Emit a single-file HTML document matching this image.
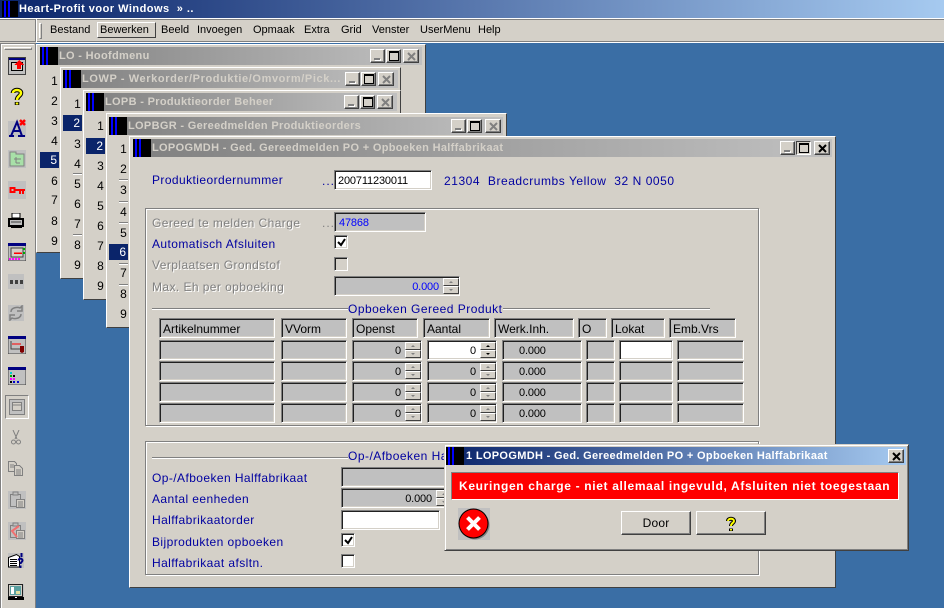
<!DOCTYPE html>
<html><head><meta charset="utf-8"><style>
html,body{margin:0;padding:0}
body{width:944px;height:608px;overflow:hidden;position:relative;background:#3a6ea5;font:12px/14px "Liberation Sans",sans-serif;color:#000}
div,i,span,svg{position:absolute;display:block;box-sizing:border-box}
i{font-style:normal}
b{font-weight:bold}
.t{white-space:nowrap;letter-spacing:.42px}
.mn{top:23px;font-size:11px;letter-spacing:0}
.bl{color:#0000a0}
.gr{color:#808080;text-shadow:1px 1px 0 #fff}
.win{background:#d4d0c8;border:1px solid;border-color:#fff #404040 #404040 #fff;box-shadow:inset 0 0 0 1px #d4d0c8,inset 1px 1px 0 1px #d4d0c8;outline:0}
.tb{height:18px;background:linear-gradient(90deg,#808080,#c0c0c0);color:#d4d0c8;font:bold 11px/18px "Liberation Sans",sans-serif;white-space:nowrap;letter-spacing:.32px;overflow:hidden;padding-left:19px}
.ic{left:0;top:0;width:18px;height:18px;background:linear-gradient(90deg,#000 2px,#00f 2px,#00f 4px,#000 4px,#000 6px,#00f 6px,#00f 8px,#000 8px)}
.btn{background:#d4d0c8;border:1px solid;border-color:#fff #404040 #404040 #fff;box-shadow:inset -1px -1px 0 #808080,inset 1px 1px 0 #d4d0c8}
.m{width:15px;height:14px;top:141px}
.m:after{content:"";position:absolute;left:3px;bottom:2px;width:6px;height:2px;background:#808080;box-shadow:1px 1px 0 #fff}
.x{width:16px;height:14px}
.x svg{left:3px;top:2px}
.mx:after{content:"";position:absolute;left:2px;top:1px;width:10px;height:10px;border:1px solid #000;border-top-width:2px;box-sizing:border-box}
.f{border:1px solid;border-color:#808080 #fff #fff #808080;box-shadow:inset 1px 1px 0 #202020,inset -1px -1px 0 #d4d0c8;background:#c0c0c0;white-space:nowrap;letter-spacing:0;padding:3px 0 0 3px;font-size:12px;line-height:14px}
.d{font-size:11px;letter-spacing:-.15px}
.w{background:#fff}
.r{text-align:right}
.n{text-align:center;width:19px;font-size:12px;line-height:16px;height:16px;margin:1px 0 0 1px}
.h{background:#0a246a;color:#fff;margin:0;text-align:right;padding-right:2px}
.hl{height:2px;background:linear-gradient(#808080 1px,#fff 1px)}
.gb{background:transparent;border:1px solid #808080;box-shadow:inset 1px 1px 0 #fff,1px 1px 0 #fff}
.ck{width:14px;height:14px;border:1px solid;border-color:#808080 #fff #fff #808080;box-shadow:inset 1px 1px 0 #202020,inset -1px -1px 0 #d4d0c8;background:#fff}
.ck.e{background:#d4d0c8}
.ck svg{left:2px;top:2px}
.sp{width:16px;height:16px}
.sp u{position:absolute;display:block;left:0;width:16px;height:8px;background:#d4d0c8;border:1px solid;border-color:#fff #404040 #404040 #fff;box-sizing:border-box}
.sp u:first-child{top:0}
.sp u:last-child{top:8px}
.sp u:after{content:"";position:absolute;left:5px;top:2px;border:2px solid transparent;border-top:0;border-bottom:2px solid #808080}
.sp u:last-child:after{border-bottom:0;border-top:2px solid #808080}
.sp.k u:after{border-bottom-color:#000}
.sp.k u:last-child:after{border-top-color:#000}
</style></head><body>

<!-- main title -->
<div style="left:0;top:0;width:944px;height:18px;background:linear-gradient(90deg,#0a246a,#a6caf0);color:#fff;font:bold 11px/19px 'Liberation Sans',sans-serif;letter-spacing:.48px;padding-left:19px;white-space:nowrap">Heart-Profit voor Windows &nbsp;» ..<i class="ic" style="left:2px;top:1px;height:16px;width:16px"></i></div>

<!-- menubar -->
<div style="left:0;top:18px;width:944px;height:25px;background:#d4d0c8;border-top:1px solid #fff;box-shadow:inset 0 1px 0 #808080"></div>
<div style="left:0;top:41px;width:944px;height:1px;background:#808080"></div>
<div style="left:36px;top:42px;width:908px;height:1px;background:#fff"></div>
<div style="left:35px;top:19px;width:1px;height:23px;background:#808080"></div>
<div style="left:36px;top:19px;width:1px;height:23px;background:#fff"></div>
<div style="left:39px;top:23px;width:3px;height:16px;background:#d4d0c8;border:1px solid;border-color:#fff #808080 #808080 #fff"></div>
<div style="left:97px;top:22px;width:59px;height:16px;border:1px solid;border-color:#fff #404040 #404040 #fff"></div>
<span class="t mn" style="left:50px">Bestand</span>
<span class="t mn" style="left:100px">Bewerken</span>
<span class="t mn" style="left:161px">Beeld</span>
<span class="t mn" style="left:197px">Invoegen</span>
<span class="t mn" style="left:253px">Opmaak</span>
<span class="t mn" style="left:304px">Extra</span>
<span class="t mn" style="left:341px">Grid</span>
<span class="t mn" style="left:372px">Venster</span>
<span class="t mn" style="left:420px">UserMenu</span>
<span class="t mn" style="left:478px">Help</span>

<!-- left toolbar -->
<div style="left:0;top:43px;width:36px;height:565px;background:#d4d0c8;border-left:1px solid #808080;border-right:1px solid #808080;box-shadow:inset 1px 0 0 #fff;border-top:1px solid #808080"></div>
<div style="left:1px;top:44px;width:33px;height:1px;background:#fff"></div>
<div style="left:4px;top:47px;width:28px;height:3px;border:1px solid;border-color:#fff #808080 #808080 #fff"></div>

<svg style="left:8px;top:57px" width="18" height="18" shape-rendering="crispEdges"><rect width="18" height="18" fill="#c0c0c0"/><rect width="18" height="3" fill="#000080"/><rect x=".5" y=".5" width="17" height="17" fill="none" stroke="#404040"/><rect x="3.500" y="5.500" width="11" height="8" fill="#d4d0c8" stroke="#000"/><path d="M11 3l5 5h-3v4h-4V8H6z" fill="#f00"/></svg>
<svg style="left:9px;top:87px" width="16" height="19"><path d="M4 6C4 2 12 2 12 6c0 3-4 3-4 7" fill="none" stroke="#000" stroke-width="4.500"/><path d="M8 15v3" stroke="#000" stroke-width="4.500"/><path d="M4 6C4 2 12 2 12 6c0 3-4 3-4 7" fill="none" stroke="#ff0" stroke-width="2.500"/><path d="M8 15.500v2" stroke="#ff0" stroke-width="2.500"/></svg>
<svg style="left:8px;top:119px" width="18" height="18"><rect y="2" width="18" height="16" fill="#c0c0c0"/><path d="M1 17h5M10 17h7M3 17L9 3l5 14M5 12h7" fill="none" stroke="#000080" stroke-width="2"/><path d="M12 1l5 5M17 1l-5 5" stroke="#f00" stroke-width="2.500"/></svg>
<svg style="left:8px;top:150px" width="18" height="18" shape-rendering="crispEdges"><rect width="18" height="18" fill="#c0c0c0"/><path d="M2 2h6v2h8v12H2z" fill="#a8e0a8" stroke="#808080"/><path d="M6 9h7M8 7v6M8 13h4" stroke="#808080" fill="none"/></svg>
<svg style="left:8px;top:181px" width="18" height="18" shape-rendering="crispEdges"><rect width="18" height="18" fill="#c0c0c0"/><rect x="2.500" y="7" width="4" height="4" fill="none" stroke="#f00" stroke-width="2"/><path d="M7 8h10v2H7zM11 10h2v3h-2zM14 10h2v3h-2z" fill="#f00"/></svg>
<svg style="left:8px;top:213px" width="16" height="16" shape-rendering="crispEdges"><path d="M4 0h8v5H4z" fill="#fff" stroke="#000"/><path d="M1 6h14v7H1z" fill="#c0c0c0" stroke="#000" stroke-width="2"/><path d="M3 13h11v2H3z" fill="#000"/><path d="M3 9h10" stroke="#404040"/></svg>
<svg style="left:8px;top:243px" width="18" height="18" shape-rendering="crispEdges"><rect width="18" height="18" fill="#c0c0c0" stroke="#404040"/><rect width="18" height="3" fill="#000080"/><rect x="3" y="5" width="12" height="9" fill="#d4d0c8" stroke="#404040"/><path d="M6 10h8" stroke="#f00" stroke-width="1.500"/><path d="M1 16h2M4 16h2M7 16h2M10 16h2" stroke="#f0f" stroke-width="2"/><path d="M16 5v2M16 9v2" stroke="#0a0" stroke-width="2"/></svg>
<svg style="left:8px;top:274px" width="16" height="15" shape-rendering="crispEdges"><rect width="16" height="15" fill="#c0c0c0"/><path d="M2 6h3v4H2zM7 6h3v4H7zM12 6h3v4h-3z" fill="#404040"/></svg>
<svg style="left:8px;top:305px" width="16" height="16"><rect width="16" height="16" fill="#c0c0c0"/><path d="M3 7C3 2 10 2 12 3l2-2v5H9M13 9c0 5-7 5-9 4l-2 2v-5h5" fill="none" stroke="#808080" stroke-width="1.500"/></svg>
<svg style="left:8px;top:336px" width="18" height="18" shape-rendering="crispEdges"><rect width="18" height="18" fill="#c0c0c0" stroke="#404040"/><rect width="18" height="3" fill="#000080"/><path d="M4 8h9" stroke="#f00"/><path d="M3 5v8h9" fill="none" stroke="#404040"/><path d="M12 10h4v6l-2 1-2-1z" fill="#800000"/></svg>
<svg style="left:8px;top:367px" width="18" height="18" shape-rendering="crispEdges"><rect width="18" height="18" fill="#c0c0c0" stroke="#404040"/><rect width="18" height="3" fill="#000080"/><path d="M2 5h2v2H2z" fill="#0cc"/><path d="M2 8h2v2H2z" fill="#0a0"/><path d="M2 11h2v2H2zM5 11h2v2H5z" fill="#f0f"/><path d="M5 14h2v2H5zM9 14h2v2H9z" fill="#00c"/><path d="M2 14h2v2H2zM5 8h2v2H5z" fill="#000"/></svg>
<div style="left:5px;top:395px;width:24px;height:24px;border:1px solid;border-color:#808080 #fff #fff #808080;background:#d4d0c8"></div>
<svg style="left:9px;top:399px" width="16" height="16" shape-rendering="crispEdges"><rect x=".5" y=".5" width="15" height="15" fill="#c0c0c0" stroke="#808080"/><rect x="3.500" y="3.500" width="9" height="8" fill="#d4d0c8" stroke="#808080"/><path d="M4 6h8" stroke="#808080"/></svg>
<svg style="left:11px;top:430px" width="10" height="15"><path d="M2 0l4 9M8 0L4 9" stroke="#808080" fill="none"/><circle cx="2.500" cy="12" r="2" fill="none" stroke="#808080"/><circle cx="7.500" cy="12" r="2" fill="none" stroke="#808080"/></svg>
<svg style="left:8px;top:461px" width="16" height="15" shape-rendering="crispEdges"><path d="M.5.500h6l2 2v8H.5z" fill="#d4d0c8" stroke="#808080"/><path d="M6.500 4.500h5l3 3v7h-8z" fill="#d4d0c8" stroke="#808080"/><path d="M8 9h5M8 11h5M8 13h5M2 4h4M2 6h4" stroke="#808080"/></svg>
<svg style="left:8px;top:491px" width="18" height="18" shape-rendering="crispEdges"><rect width="18" height="18" fill="#c0c0c0"/><path d="M2.500 3.500h10v12h-10z" fill="none" stroke="#808080"/><path d="M5 1h5v3H5z" fill="#c0c0c0" stroke="#808080"/><path d="M8.500 8.500h8v8h-8z" fill="#d4d0c8" stroke="#808080"/><path d="M10 11h5M10 13h5M10 15h5" stroke="#808080"/></svg>
<svg style="left:8px;top:522px" width="18" height="18" shape-rendering="crispEdges"><rect width="18" height="18" fill="#c0c0c0"/><path d="M2.500 3.500h10v12h-10z" fill="none" stroke="#808080"/><path d="M5 1h5v3H5z" fill="#c0c0c0" stroke="#808080"/><path d="M8.500 8.500h8v8h-8z" fill="#d4d0c8" stroke="#808080"/><path d="M10 11h5M10 13h5M10 15h5" stroke="#808080"/><path d="M11 4L4 9l5 6" fill="none" stroke="#f07070" stroke-width="2" shape-rendering="auto"/></svg>
<svg style="left:8px;top:553px" width="16" height="15"><rect width="16" height="15" fill="#c0c0c0"/><path d="M.5 4.500l8-3 3 2v10.500H.5z" fill="#fff" stroke="#000"/><path d="M2 6.500h7M2 8.500h7M2 10.500h7M2 12.500h7" stroke="#000"/><path d="M10.500 7.500c0-2.500 4-2.500 4 0 0 1.500-2 1.500-2 3.500" fill="none" stroke="#000080" stroke-width="2"/><path d="M12.500 12.500v2.500M13.500 0v4" stroke="#000080" stroke-width="2"/></svg>
<svg style="left:8px;top:584px" width="16" height="16" shape-rendering="crispEdges"><rect width="16" height="16" fill="#c0c0c0"/><rect x=".5" y=".5" width="14" height="12" fill="#d4d0c8" stroke="#202020"/><rect x="2" y="2" width="11" height="9" fill="#5aa0a0"/><path d="M3 3h3v7H3z" fill="#fff"/><path d="M8 7h4v3H8z" fill="#e0e0a0"/><rect y="13" width="16" height="3" fill="#000"/><path d="M7 13h2v1H7z" fill="#fff"/></svg>

<!-- LO -->
<div class="win" style="left:36px;top:44px;width:390px;height:209px"></div>
<div class="tb" style="left:40px;top:47px;width:382px">LO - Hoofdmenu<i class="ic"></i>
<i class="btn m" style="left:330px;top:2px"></i><i class="btn mx" style="left:346px;top:2px;width:15px;height:14px"></i><i class="btn x" style="left:363px;top:2px"><svg width="9" height="9"><path d="M1 1l7 7M8 1L1 8" stroke="#808080" stroke-width="2"/></svg></i></div>
<span class="n" style="left:44px;top:72px">1</span><span class="n" style="left:44px;top:92px">2</span><span class="n" style="left:44px;top:112px">3</span><span class="n" style="left:44px;top:132px">4</span><span class="n h" style="left:40px;top:152px">5</span><span class="n" style="left:44px;top:172px">6</span><span class="n" style="left:44px;top:191px">7</span><span class="n" style="left:44px;top:212px">8</span><span class="n" style="left:44px;top:232px">9</span>

<!-- LOWP -->
<div class="win" style="left:60px;top:67px;width:341px;height:212px"></div>
<div class="tb" style="left:63px;top:70px;width:335px;letter-spacing:.6px">LOWP - Werkorder/Produktie/Omvorm/Pick...<i class="ic"></i>
<i class="btn m" style="left:282px;top:2px"></i><i class="btn mx" style="left:298px;top:2px;width:15px;height:14px"></i><i class="btn x" style="left:315px;top:2px"><svg width="9" height="9"><path d="M1 1l7 7M8 1L1 8" stroke="#808080" stroke-width="2"/></svg></i></div>
<span class="n" style="left:67px;top:95px">1</span><span class="n h" style="left:63px;top:115px">2</span><span class="n" style="left:67px;top:135px">3</span><span class="n" style="left:67px;top:155px">4</span><div class="hl" style="left:73px;top:173px;width:9px"></div><span class="n" style="left:67px;top:175px">5</span><span class="n" style="left:67px;top:195px">6</span><span class="n" style="left:67px;top:215px">7</span><div class="hl" style="left:73px;top:234px;width:9px"></div><span class="n" style="left:67px;top:236px">8</span><span class="n" style="left:67px;top:256px">9</span>

<!-- LOPB -->
<div class="win" style="left:83px;top:90px;width:318px;height:210px"></div>
<div class="tb" style="left:86px;top:93px;width:311px">LOPB - Produktieorder Beheer<i class="ic"></i>
<i class="btn m" style="left:258px;top:2px"></i><i class="btn mx" style="left:274px;top:2px;width:15px;height:14px"></i><i class="btn x" style="left:291px;top:2px"><svg width="9" height="9"><path d="M1 1l7 7M8 1L1 8" stroke="#808080" stroke-width="2"/></svg></i></div>
<span class="n" style="left:90px;top:117px">1</span><span class="n h" style="left:86px;top:138px">2</span><span class="n" style="left:90px;top:157px">3</span><span class="n" style="left:90px;top:177px">4</span><span class="n" style="left:90px;top:197px">5</span><span class="n" style="left:90px;top:217px">6</span><span class="n" style="left:90px;top:237px">7</span><span class="n" style="left:90px;top:257px">8</span><span class="n" style="left:90px;top:277px">9</span>

<!-- LOPBGR -->
<div class="win" style="left:106px;top:113px;width:401px;height:215px"></div>
<div class="tb" style="left:109px;top:117px;width:394px">LOPBGR - Gereedmelden Produktieorders<i class="ic"></i>
<i class="btn m" style="left:342px;top:2px"></i><i class="btn mx" style="left:358px;top:2px;width:15px;height:14px"></i><i class="btn x" style="left:376px;top:2px"><svg width="9" height="9"><path d="M1 1l7 7M8 1L1 8" stroke="#808080" stroke-width="2"/></svg></i></div>
<span class="n" style="left:113px;top:140px">1</span><span class="n" style="left:113px;top:160px">2</span><div class="hl" style="left:119px;top:179px;width:9px"></div><span class="n" style="left:113px;top:181px">3</span><div class="hl" style="left:119px;top:201px;width:9px"></div><span class="n" style="left:113px;top:203px">4</span><div class="hl" style="left:119px;top:222px;width:9px"></div><span class="n" style="left:113px;top:224px">5</span><span class="n h" style="left:109px;top:244px">6</span><div class="hl" style="left:119px;top:263px;width:9px"></div><span class="n" style="left:113px;top:264px">7</span><div class="hl" style="left:119px;top:284px;width:9px"></div><span class="n" style="left:113px;top:285px">8</span><span class="n" style="left:113px;top:305px">9</span>

<!-- LOPOGMDH -->
<div class="win" style="left:129px;top:136px;width:707px;height:452px"></div>
<div class="tb" style="left:133px;top:139px;width:699px">LOPOGMDH - Ged. Gereedmelden PO + Opboeken Halffabrikaat<i class="ic"></i></div>
<i class="btn m" style="left:780px"></i><i class="btn mx" style="left:796px;top:141px;width:15px;height:14px;border-color:#404040 #fff #fff #404040;box-shadow:none"></i><i class="btn x" style="left:814px;top:141px"><svg width="9" height="9"><path d="M1 1l7 7M8 1L1 8" stroke="#000" stroke-width="2"/></svg></i>

<span class="t bl" style="left:152px;top:173px">Produktieordernummer</span>
<span class="t" style="left:322px;top:174px;color:#0000a0;letter-spacing:1px">...</span>
<i class="f w d" style="left:334px;top:170px;width:98px;height:20px;padding-left:3px">200711230011</i>
<span class="t bl" style="left:444px;top:174px;letter-spacing:.55px">21304 &nbsp;Breadcrumbs Yellow &nbsp;32 N 0050</span>

<!-- group 1 -->
<div class="gb" style="left:145px;top:208px;width:614px;height:218px"></div>
<span class="t gr" style="left:152px;top:216px">Gereed te melden Charge</span>
<span class="t" style="left:322px;top:216px;color:#808080;letter-spacing:1px">...</span>
<i class="f d" style="left:334px;top:212px;width:92px;height:20px;color:#0000ff;padding-left:4px">47868</i>
<span class="t bl" style="left:152px;top:237px">Automatisch Afsluiten</span>
<i class="ck" style="left:334px;top:235px"><svg width="9" height="9"><path d="M1 4l3 3 4-6" fill="none" stroke="#000" stroke-width="2"/></svg></i>
<span class="t gr" style="left:152px;top:258px">Verplaatsen Grondstof</span>
<i class="ck e" style="left:334px;top:257px"></i>
<span class="t gr" style="left:152px;top:280px">Max. Eh per opboeking</span>
<i class="f r d" style="left:334px;top:276px;width:126px;height:20px;color:#0000ff;padding-right:20px">0.000</i>
<i class="sp" style="left:443px;top:278px"><u></u><u></u></i>

<div class="hl" style="left:152px;top:308px;width:196px"></div>
<span class="t bl" style="left:348px;top:302px;letter-spacing:.48px">Opboeken Gereed Produkt</span>
<div class="hl" style="left:503px;top:308px;width:207px"></div>

<i class="f" style="left:159px;top:318px;width:116px;height:20px">Artikelnummer</i>
<i class="f" style="left:281px;top:318px;width:66px;height:20px">VVorm</i>
<i class="f" style="left:352px;top:318px;width:66px;height:20px">Openst</i>
<i class="f" style="left:423px;top:318px;width:67px;height:20px">Aantal</i>
<i class="f" style="left:494px;top:318px;width:80px;height:20px">Werk.Inh.</i>
<i class="f" style="left:578px;top:318px;width:29px;height:20px">O</i>
<i class="f" style="left:611px;top:318px;width:54px;height:20px">Lokat</i>
<i class="f" style="left:669px;top:318px;width:67px;height:20px">Emb.Vrs</i>

<!-- row 1 -->
<i class="f" style="left:159px;top:340px;width:116px;height:20px"></i><i class="f" style="left:281px;top:340px;width:66px;height:20px"></i>
<i class="f r d" style="left:352px;top:340px;width:70px;height:20px;padding-right:20px">0</i><i class="sp" style="left:405px;top:342px"><u></u><u></u></i>
<i class="f w r d" style="left:427px;top:340px;width:70px;height:20px;padding-right:20px">0</i><i class="sp k" style="left:480px;top:342px"><u></u><u></u></i>
<i class="f d" style="left:502px;top:340px;width:80px;height:20px;padding-left:16px">0.000</i>
<i class="f" style="left:586px;top:340px;width:29px;height:20px"></i>
<i class="f w" style="left:619px;top:340px;width:54px;height:20px"></i>
<i class="f" style="left:677px;top:340px;width:67px;height:20px"></i>
<!-- row 2 -->
<i class="f" style="left:159px;top:361px;width:116px;height:20px"></i><i class="f" style="left:281px;top:361px;width:66px;height:20px"></i>
<i class="f r d" style="left:352px;top:361px;width:70px;height:20px;padding-right:20px">0</i><i class="sp" style="left:405px;top:363px"><u></u><u></u></i>
<i class="f r d" style="left:427px;top:361px;width:70px;height:20px;padding-right:20px">0</i><i class="sp" style="left:480px;top:363px"><u></u><u></u></i>
<i class="f d" style="left:502px;top:361px;width:80px;height:20px;padding-left:16px">0.000</i>
<i class="f" style="left:586px;top:361px;width:29px;height:20px"></i>
<i class="f" style="left:619px;top:361px;width:54px;height:20px"></i>
<i class="f" style="left:677px;top:361px;width:67px;height:20px"></i>
<!-- row 3 -->
<i class="f" style="left:159px;top:382px;width:116px;height:20px"></i><i class="f" style="left:281px;top:382px;width:66px;height:20px"></i>
<i class="f r d" style="left:352px;top:382px;width:70px;height:20px;padding-right:20px">0</i><i class="sp" style="left:405px;top:384px"><u></u><u></u></i>
<i class="f r d" style="left:427px;top:382px;width:70px;height:20px;padding-right:20px">0</i><i class="sp" style="left:480px;top:384px"><u></u><u></u></i>
<i class="f d" style="left:502px;top:382px;width:80px;height:20px;padding-left:16px">0.000</i>
<i class="f" style="left:586px;top:382px;width:29px;height:20px"></i>
<i class="f" style="left:619px;top:382px;width:54px;height:20px"></i>
<i class="f" style="left:677px;top:382px;width:67px;height:20px"></i>
<!-- row 4 -->
<i class="f" style="left:159px;top:403px;width:116px;height:20px"></i><i class="f" style="left:281px;top:403px;width:66px;height:20px"></i>
<i class="f r d" style="left:352px;top:403px;width:70px;height:20px;padding-right:20px">0</i><i class="sp" style="left:405px;top:405px"><u></u><u></u></i>
<i class="f r d" style="left:427px;top:403px;width:70px;height:20px;padding-right:20px">0</i><i class="sp" style="left:480px;top:405px"><u></u><u></u></i>
<i class="f d" style="left:502px;top:403px;width:80px;height:20px;padding-left:16px">0.000</i>
<i class="f" style="left:586px;top:403px;width:29px;height:20px"></i>
<i class="f" style="left:619px;top:403px;width:54px;height:20px"></i>
<i class="f" style="left:677px;top:403px;width:67px;height:20px"></i>

<!-- group 2 -->
<div class="gb" style="left:145px;top:441px;width:614px;height:134px"></div>
<div class="hl" style="left:152px;top:457px;width:196px"></div>
<span class="t bl" style="left:348px;top:449px;letter-spacing:.48px">Op-/Afboeken Halffabrikaat</span>
<span class="t bl" style="left:152px;top:471px">Op-/Afboeken Halffabrikaat</span>
<i class="f" style="left:341px;top:467px;width:130px;height:20px"></i>
<span class="t bl" style="left:152px;top:492px">Aantal eenheden</span>
<i class="f r d" style="left:341px;top:488px;width:130px;height:20px;padding-right:38px">0.000</i><i class="sp" style="left:436px;top:490px"><u></u><u></u></i>
<span class="t bl" style="left:152px;top:513px">Halffabrikaatorder</span>
<i class="f w" style="left:341px;top:510px;width:99px;height:20px"></i>
<span class="t bl" style="left:152px;top:535px">Bijprodukten opboeken</span>
<i class="ck" style="left:341px;top:533px"><svg width="9" height="9"><path d="M1 4l3 3 4-6" fill="none" stroke="#000" stroke-width="2"/></svg></i>
<span class="t bl" style="left:152px;top:556px">Halffabrikaat afsltn.</span>
<i class="ck" style="left:341px;top:554px"></i>

<!-- dialog -->
<div class="win" style="left:444px;top:444px;width:465px;height:107px;border-color:#d4d0c8 #404040 #404040 #d4d0c8;box-shadow:inset 1px 1px 0 #fff,inset -1px -1px 0 #808080"></div>
<div style="left:446px;top:447px;width:460px;height:18px;background:linear-gradient(90deg,#0a246a,#a6caf0);color:#fff;font:bold 11px/18px 'Liberation Sans',sans-serif;letter-spacing:.33px;padding-left:20px;white-space:nowrap">1 LOPOGMDH - Ged. Gereedmelden PO + Opboeken Halffabrikaat<i class="ic" style="height:18px"></i></div>
<i class="btn x" style="left:888px;top:449px"><svg width="9" height="9"><path d="M1 1l7 7M8 1L1 8" stroke="#000" stroke-width="2"/></svg></i>
<div style="left:451px;top:472px;width:448px;height:28px;background:#f00;border:1px solid;border-color:#808080 #fff #fff #808080;color:#fff;font:bold 12px/26px 'Liberation Sans',sans-serif;letter-spacing:.66px;padding-left:7px;white-space:nowrap">Keuringen charge - niet allemaal ingevuld, Afsluiten niet toegestaan</div>
<svg style="left:458px;top:508px" width="32" height="32"><rect width="32" height="32" fill="#c0c0c0"/><circle cx="17" cy="17" r="14.500" fill="#808080"/><circle cx="15.500" cy="15.500" r="15" fill="#000"/><circle cx="15.500" cy="15.500" r="14" fill="#f00"/><path d="M9.500 9.500l12 12M21.500 9.500l-12 12" stroke="#fff" stroke-width="4"/></svg>
<div class="btn" style="left:621px;top:511px;width:70px;height:24px;text-align:center;line-height:22px;letter-spacing:.2px">Door</div>
<div class="btn" style="left:696px;top:511px;width:70px;height:24px"></div>
<svg style="left:724px;top:516px" width="14" height="17"><path d="M4 5C4 2 10 2 10 5c0 2-3 2-3 5" fill="none" stroke="#000" stroke-width="4"/><path d="M7 12.500v2.500" stroke="#000" stroke-width="4"/><path d="M4 5C4 2 10 2 10 5c0 2-3 2-3 5" fill="none" stroke="#ff0" stroke-width="2"/><path d="M7 13v1.500" stroke="#ff0" stroke-width="2"/></svg>
</body></html>
